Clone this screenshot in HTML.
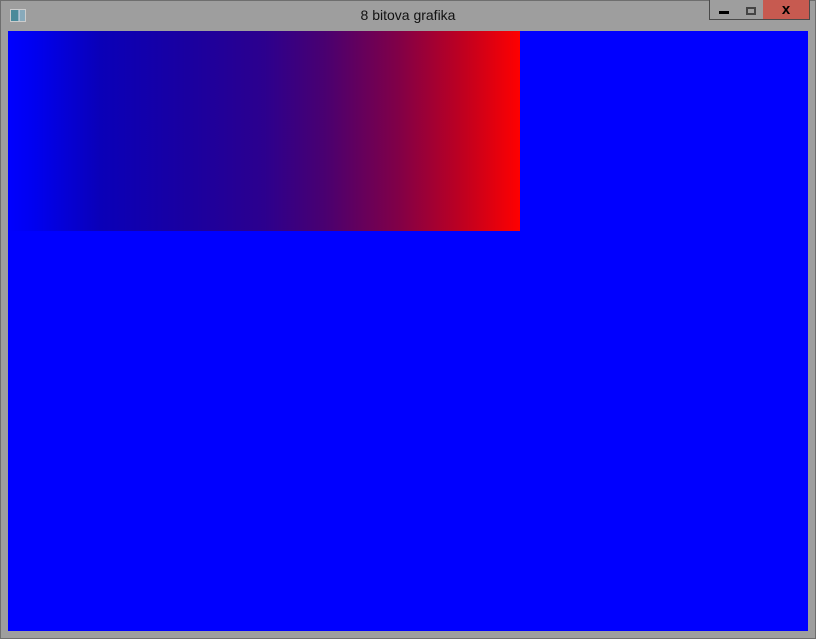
<!DOCTYPE html>
<html><head><style>
html,body{margin:0;padding:0}
body{width:816px;height:639px;background:#9e9e9e;position:relative;overflow:hidden;font-family:"Liberation Sans",sans-serif}
.frame{position:absolute;left:0;top:0;width:814px;height:637px;border:1px solid #6e6e6e;background:#9e9e9e}
.title{position:absolute;left:0;width:816px;top:7px;text-align:center;font-size:14px;color:#111}
.client{position:absolute;left:8px;top:31px;width:800px;height:600px;background:#0000ff}
.grad{position:absolute;left:8px;top:31px;width:512px;height:200px;background:linear-gradient(to right,#0000ff 0%,#0000f0 5%,#0a00b8 18%,#1a00a0 35%,#2c008e 50%,#4a0070 62%,#800048 76%,#c00020 89%,#ff0000 100%)}
.btn{position:absolute;top:0;height:20px;border:1px solid #4a4a4a;border-top:none;box-sizing:border-box}
.icon{position:absolute;left:10px;top:9px;width:14px;height:11px;background:linear-gradient(to right,#4a8a9a 0 55%,#dde 55% 62%,#8ab 62%);border:1px solid #ccc}
</style></head><body>
<div class="frame"></div>
<div class="icon"></div>
<div class="title">8 bitova grafika</div>
<div class="btn" style="left:709px;width:29px;background:#9e9e9e"><div style="position:absolute;left:9px;top:11px;width:10px;height:3px;background:#000"></div></div>
<div class="btn" style="left:737px;width:27px;background:#9e9e9e;border-left:none"><div style="position:absolute;left:9px;top:7px;width:6px;height:4px;border:2px solid #444"></div></div>
<div class="btn" style="left:763px;width:47px;background:#c75a50;border-left:none"><div style="position:absolute;left:0;width:46px;top:1px;text-align:center;font-weight:bold;font-size:15px;color:#000">x</div></div>
<div class="client"></div>
<div class="grad"></div>
</body></html>
